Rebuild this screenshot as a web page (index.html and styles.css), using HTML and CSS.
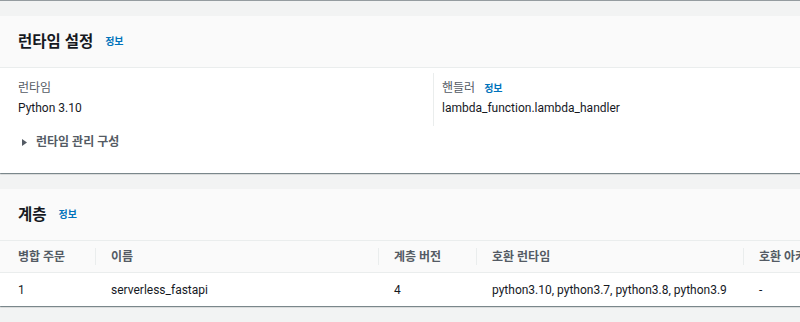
FILE: index.html
```html
<!DOCTYPE html>
<html lang="ko">
<head>
<meta charset="utf-8">
<link rel="stylesheet" href="styles.css">
</head>
<body>
<div class="topline"></div>
<main class="page">
  <section class="card">
    <header class="card-head">
      <h2 class="title">런타임 설정</h2>
      <a class="info">정보</a>
    </header>
    <div class="card-body">
      <div class="cols">
        <div class="col">
          <div class="label">런타임</div>
          <div class="value">Python 3.10</div>
        </div>
        <div class="col col-right">
          <div class="label">핸들러<a class="info info-sm">정보</a></div>
          <div class="value">lambda_function.lambda_handler</div>
        </div>
      </div>
      <div class="expander">
        <svg class="caret" width="5" height="7" viewBox="0 0 5 7"><polygon points="0,0 5,3.5 0,7" fill="#545b64"/></svg>
        <span>런타임 관리 구성</span>
      </div>
    </div>
  </section>

  <section class="card card-layers">
    <header class="card-head">
      <h2 class="title">계층</h2>
      <a class="info">정보</a>
    </header>
    <div class="table">
      <div class="row row-head">
        <div class="cell">병합 주문</div>
        <div class="cell">이름</div>
        <div class="cell">계층 버전</div>
        <div class="cell">호환 런타임</div>
        <div class="cell">호환 아키텍처</div>
      </div>
      <div class="row row-data">
        <div class="cell">1</div>
        <div class="cell">serverless_fastapi</div>
        <div class="cell">4</div>
        <div class="cell">python3.10, python3.7, python3.8, python3.9</div>
        <div class="cell">-</div>
      </div>
    </div>
  </section>
</main>
</body>
</html>
```

FILE: styles.css
```css
html, body {
  margin: 0;
  padding: 0;
}
body {
  background: #f2f3f3;
  font-family: Roboto, "Noto Sans CJK KR", sans-serif;
  font-size: 12px;
  line-height: 16px;
  color: #16191f;
  overflow: hidden;
  width: 800px;
  height: 322px;
}
.topline {
  height: 1px;
  background: #959ca0;
}
.page {
  width: 900px;
  padding-top: 15px;
}
.card {
  background: #ffffff;
  box-shadow: 0 1px 1px 0 rgba(0, 28, 36, 0.3), 1px 1px 1px 0 rgba(0, 28, 36, 0.15), -1px 1px 1px 0 rgba(0, 28, 36, 0.15);
}
.card-layers {
  margin-top: 16px;
}
.card-head {
  height: 51px;
  background: #fafafa;
  border-bottom: 1px solid #eaeded;
  display: flex;
  align-items: center;
  padding: 0 18px;
  box-sizing: content-box;
}
.title {
  margin: 0;
  font-size: 15.5px;
  font-weight: 700;
  line-height: 20px;
  color: #16191f;
}
.info {
  margin-left: 12px;
  font-size: 10px;
  font-weight: 700;
  color: #0073bb;
  line-height: 14px;
  padding-top: 1px;
}
.info-sm {
  margin-left: 9px;
}
.card-body {
  padding: 5px 0 23px 18px;
}
.cols {
  display: grid;
  grid-template-columns: 415px 1fr;
}
.col {
  padding: 7px 0 10px 0;
}
.col-right {
  border-left: 1px solid #eaeded;
  padding-left: 8px;
}
.label {
  color: #545b64;
  display: flex;
  align-items: center;
}
.value {
  margin-top: 4px;
  color: #16191f;
}
.expander {
  margin-top: 8px;
  padding-left: 4px;
  display: flex;
  align-items: center;
  gap: 9px;
  font-weight: 700;
  color: #545b64;
}
.caret {
  display: block;
}
.row {
  display: grid;
  grid-template-columns: 95px 283px 98px 267px 157px;
}
.row-head {
  height: 31px;
  background: #fafafa;
  border-bottom: 1px solid #eaeded;
  color: #545b64;
  font-weight: 700;
}
.row-data {
  height: 33px;
}
.cell {
  display: flex;
  align-items: center;
  padding-left: 16px;
  white-space: nowrap;
}
.cell:first-child {
  padding-left: 18px;
}
.row-head .cell:not(:first-child) {
  padding-left: 0;
}
.row-head .cell:not(:first-child)::before {
  content: "";
  width: 1px;
  height: 17px;
  background: #eaeded;
  margin-right: 15px;
}
```
